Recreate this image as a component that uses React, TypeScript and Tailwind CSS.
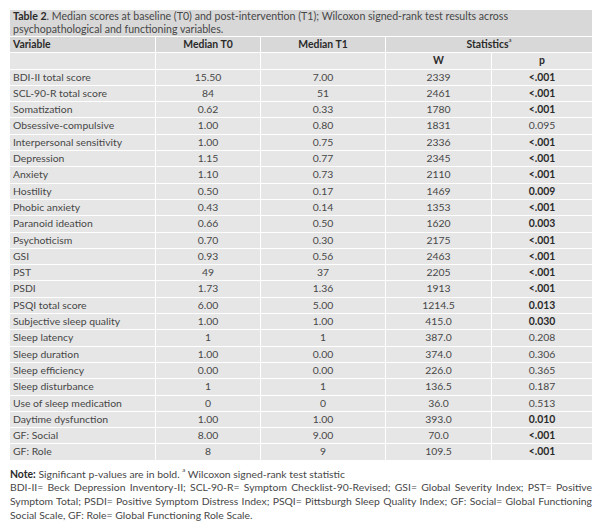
import React from 'react';

type Row = {
  name: string;
  t0: string;
  t1: string;
  w: string;
  p: string;
  bold?: boolean;
};

const rows: Row[] = [
  { name: 'BDI-II total score', t0: '15.50', t1: '7.00', w: '2339', p: '<.001', bold: true },
  { name: 'SCL-90-R total score', t0: '84', t1: '51', w: '2461', p: '<.001', bold: true },
  { name: 'Somatization', t0: '0.62', t1: '0.33', w: '1780', p: '<.001', bold: true },
  { name: 'Obsessive-compulsive', t0: '1.00', t1: '0.80', w: '1831', p: '0.095' },
  { name: 'Interpersonal sensitivity', t0: '1.00', t1: '0.75', w: '2336', p: '<.001', bold: true },
  { name: 'Depression', t0: '1.15', t1: '0.77', w: '2345', p: '<.001', bold: true },
  { name: 'Anxiety', t0: '1.10', t1: '0.73', w: '2110', p: '<.001', bold: true },
  { name: 'Hostility', t0: '0.50', t1: '0.17', w: '1469', p: '0.009', bold: true },
  { name: 'Phobic anxiety', t0: '0.43', t1: '0.14', w: '1353', p: '<.001', bold: true },
  { name: 'Paranoid ideation', t0: '0.66', t1: '0.50', w: '1620', p: '0.003', bold: true },
  { name: 'Psychoticism', t0: '0.70', t1: '0.30', w: '2175', p: '<.001', bold: true },
  { name: 'GSI', t0: '0.93', t1: '0.56', w: '2463', p: '<.001', bold: true },
  { name: 'PST', t0: '49', t1: '37', w: '2205', p: '<.001', bold: true },
  { name: 'PSDI', t0: '1.73', t1: '1.36', w: '1913', p: '<.001', bold: true },
  { name: 'PSQI total score', t0: '6.00', t1: '5.00', w: '1214.5', p: '0.013', bold: true },
  { name: 'Subjective sleep quality', t0: '1.00', t1: '1.00', w: '415.0', p: '0.030', bold: true },
  { name: 'Sleep latency', t0: '1', t1: '1', w: '387.0', p: '0.208' },
  { name: 'Sleep duration', t0: '1.00', t1: '0.00', w: '374.0', p: '0.306' },
  { name: 'Sleep efficiency', t0: '0.00', t1: '0.00', w: '226.0', p: '0.365' },
  { name: 'Sleep disturbance', t0: '1', t1: '1', w: '136.5', p: '0.187' },
  { name: 'Use of sleep medication', t0: '0', t1: '0', w: '36.0', p: '0.513' },
  { name: 'Daytime dysfunction', t0: '1.00', t1: '1.00', w: '393.0', p: '0.010', bold: true },
  { name: 'GF: Social', t0: '8.00', t1: '9.00', w: '70.0', p: '<.001', bold: true },
  { name: 'GF: Role', t0: '8', t1: '9', w: '109.5', p: '<.001', bold: true },
];

// column template shared by every row
const cols = 'grid grid-cols-[145px_104px_124px_105px_100px] gap-x-px h-[15.3px]';

export default function App() {
  return (
    <div className="min-h-[531px] w-[616px] bg-white pt-[10px] pl-[10px] text-[#474747] font-['Lato','Open_Sans',sans-serif]">
      <div className="w-[582px]">
        {/* Caption */}
        <div className="bg-[#d8d8d8] px-[3px] h-[26px] text-[10.6px] leading-[12.5px]">
          <span className="font-bold text-[#2a2a2a]">Table 2</span>. Median scores at baseline (T0) and post-intervention (T1); Wilcoxon signed-rank test results across
          <br />
          psychopathological and functioning variables.
        </div>

        <div className="flex flex-col gap-y-px pt-px text-[10.4px] leading-[15.3px]">
          {/* Header */}
          <div className={`${cols} font-bold text-[#2a2a2a]`}>
            <div className="bg-[#d8d8d8] pl-[3px]">Variable</div>
            <div className="bg-[#d8d8d8] text-center">Median T0</div>
            <div className="bg-[#d8d8d8] text-center">Median T1</div>
            <div className="col-span-2 bg-[#d8d8d8] text-center">
              Statistics<sup className="text-[6px] font-normal align-[3px]">a</sup>
            </div>
          </div>
          <div className={`${cols} font-bold text-[#2a2a2a]`}>
            <div className="bg-[#e6e6e6]" />
            <div className="bg-[#e6e6e6]" />
            <div className="bg-[#e6e6e6]" />
            <div className="bg-[#e6e6e6] text-center">W</div>
            <div className="bg-[#e6e6e6] text-center">p</div>
          </div>

          {rows.map((r) => (
            <div key={r.name} className={cols}>
              <div className="bg-[#e6e6e6] pl-[3px] whitespace-nowrap">{r.name}</div>
              <div className="bg-[#e6e6e6] text-center">{r.t0}</div>
              <div className="bg-[#e6e6e6] text-center">{r.t1}</div>
              <div className="bg-[#e6e6e6] text-center">{r.w}</div>
              <div className={`bg-[#e6e6e6] text-center ${r.bold ? 'font-bold text-[#2a2a2a]' : ''}`}>{r.p}</div>
            </div>
          ))}
        </div>

        {/* Notes */}
        <div className="mt-[8px] text-[10.4px] leading-[13.6px]">
          <p>
            <span className="font-bold text-[#2a2a2a]">Note:</span> Significant p-values are in bold.{' '}
            <sup className="text-[6px] align-[3px]">a</sup> Wilcoxon signed-rank test statistic
          </p>
          <p className="text-justify">
            BDI-II= Beck Depression Inventory-II; SCL-90-R= Symptom Checklist-90-Revised; GSI= Global Severity Index; PST= Positive Symptom Total; PSDI= Positive Symptom Distress Index; PSQI= Pittsburgh Sleep Quality Index; GF: Social= Global Functioning Social Scale, GF: Role= Global Functioning Role Scale.
          </p>
        </div>
      </div>
    </div>
  );
}
